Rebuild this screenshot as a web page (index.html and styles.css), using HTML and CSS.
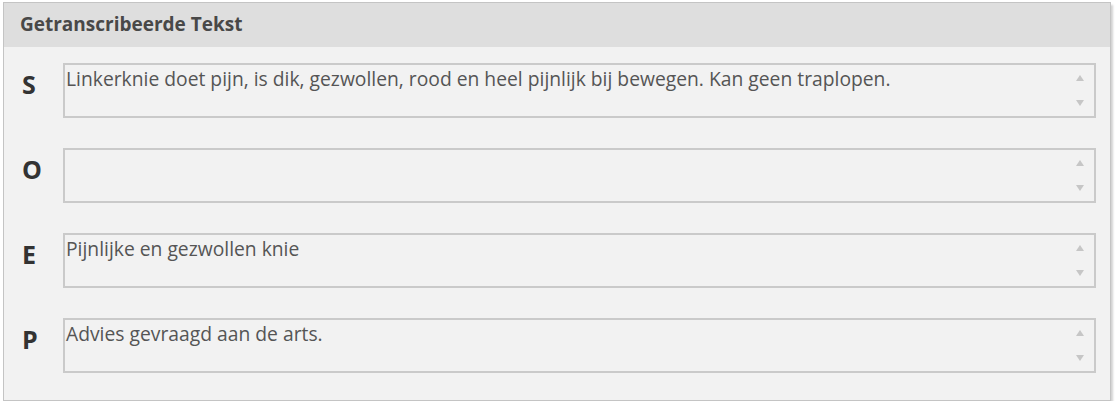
FILE: index.html
```html
<!DOCTYPE html>
<html lang="nl">
<head>
    <meta charset="UTF-8">
    <meta name="viewport" content="width=device-width, initial-scale=1.0">
    <title>Getranscribeerde Tekst</title>
    <link rel="stylesheet" href="styles.css">
</head>
<body>
    <div class="panel">
        <div class="panel-header">Getranscribeerde Tekst</div>
        <div class="panel-body">
            <div class="soep-row">
                <div class="soep-label">S</div>
                <div class="soep-field">
                    <div class="soep-text">Linkerknie doet pijn, is dik, gezwollen, rood en heel pijnlijk bij bewegen. Kan geen traplopen.</div>
                    <div class="scroll-arrows"><span class="arrow-up"></span><span class="arrow-down"></span></div>
                </div>
            </div>
            <div class="soep-row">
                <div class="soep-label">O</div>
                <div class="soep-field">
                    <div class="soep-text"></div>
                    <div class="scroll-arrows"><span class="arrow-up"></span><span class="arrow-down"></span></div>
                </div>
            </div>
            <div class="soep-row">
                <div class="soep-label">E</div>
                <div class="soep-field">
                    <div class="soep-text">Pijnlijke en gezwollen knie</div>
                    <div class="scroll-arrows"><span class="arrow-up"></span><span class="arrow-down"></span></div>
                </div>
            </div>
            <div class="soep-row">
                <div class="soep-label">P</div>
                <div class="soep-field">
                    <div class="soep-text">Advies gevraagd aan de arts.</div>
                    <div class="scroll-arrows"><span class="arrow-up"></span><span class="arrow-down"></span></div>
                </div>
            </div>
        </div>
    </div>
</body>
</html>
```

FILE: styles.css
```css
* {
    box-sizing: border-box;
}

body {
    margin: 0;
    padding: 0;
    background: #ffffff;
    font-family: 'Open Sans', 'Noto Sans', sans-serif;
}

.panel {
    margin: 2px 0 0 3px;
    width: 1108px;
    height: 399px;
    background: #f2f2f2;
    border: 1px solid #c4c4c4;
    box-shadow: 2px 3px 2px rgba(0, 0, 0, 0.18);
}

.panel-header {
    height: 44px;
    background: #dedede;
    padding: 0 0 2px 16px;
    display: flex;
    align-items: center;
    font-size: 19px;
    font-weight: 700;
    color: #484848;
}

.panel-body {
    padding: 16px 0 0 0;
    display: flex;
    flex-direction: column;
    gap: 30px;
}

.soep-row {
    display: flex;
}

.soep-label {
    width: 59px;
    padding: 4px 0 0 18px;
    font-size: 25px;
    font-weight: 700;
    color: #333333;
}

.soep-field {
    width: 1033px;
    height: 55px;
    border: 2px solid #cacaca;
    display: flex;
}

.soep-text {
    flex: 1;
    padding: 0 0 0 1px;
    font-size: 19.3px;
    color: #555555;
}

.scroll-arrows {
    width: 28px;
    display: flex;
    flex-direction: column;
    align-items: center;
    justify-content: space-between;
    padding: 10px 0 10px 0;
}

.arrow-up {
    width: 0;
    height: 0;
    border-left: 4px solid transparent;
    border-right: 4px solid transparent;
    border-bottom: 6px solid #c6c6c6;
}

.arrow-down {
    width: 0;
    height: 0;
    border-left: 4px solid transparent;
    border-right: 4px solid transparent;
    border-top: 6px solid #c6c6c6;
}
```
